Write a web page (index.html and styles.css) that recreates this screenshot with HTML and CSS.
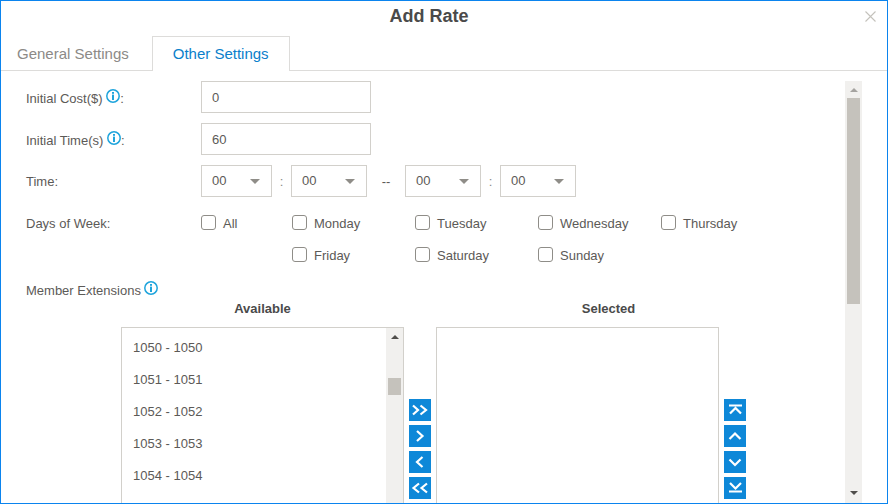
FILE: index.html
```html
<!DOCTYPE html>
<html lang="en">
<head>
    <meta charset="UTF-8">
    <meta name="viewport" content="width=device-width, initial-scale=1.0">
    <title>Add Rate</title>
    <link rel="stylesheet" href="styles.css">
</head>
<body>
    <svg class="defs" width="0" height="0">
        <symbol id="info" viewBox="0 0 14 14">
            <circle cx="7" cy="7" r="6.200" fill="none" stroke="#1ea4dc" stroke-width="1.500"/>
            <rect x="6" y="3" width="2" height="1.800" fill="#1ea4dc"/>
            <rect x="6" y="5.600" width="2" height="5.400" fill="#1ea4dc"/>
        </symbol>
    </svg>

    <div class="dialog">
        <div class="dialog-title">
            <h1>Add Rate</h1>
            <svg class="close" width="11" height="11" viewBox="0 0 11 11"><path d="M0.500 0.500L10.500 10.500M10.500 0.500L0.500 10.500" stroke="#c4c2bc" stroke-width="1.100" fill="none"/></svg>
        </div>
        <div class="tabs">
            <a class="tab">General Settings</a>
            <a class="tab active">Other Settings</a>
        </div>

        <div class="dialog-body">
            <div class="form">
                <div class="row">
                    <label class="label">Initial Cost($) <svg class="info"><use href="#info"/></svg>:</label>
                    <input class="text-input" type="text" value="0">
                </div>
                <div class="row">
                    <label class="label">Initial Time(s) <svg class="info"><use href="#info"/></svg>:</label>
                    <input class="text-input" type="text" value="60">
                </div>
                <div class="row">
                    <label class="label">Time:</label>
                    <div class="select first">00<i class="caret"></i></div>
                    <span class="colon">:</span>
                    <div class="select">00<i class="caret"></i></div>
                    <span class="dash">--</span>
                    <div class="select">00<i class="caret"></i></div>
                    <span class="colon">:</span>
                    <div class="select">00<i class="caret"></i></div>
                </div>
                <div class="days-row">
                    <label class="label">Days of Week:</label>
                    <div class="days">
                        <label class="check"><input type="checkbox">All</label>
                        <label class="check"><input type="checkbox">Monday</label>
                        <label class="check"><input type="checkbox">Tuesday</label>
                        <label class="check"><input type="checkbox">Wednesday</label>
                        <label class="check"><input type="checkbox">Thursday</label>
                        <label class="check second-row"><input type="checkbox">Friday</label>
                        <label class="check"><input type="checkbox">Saturday</label>
                        <label class="check"><input type="checkbox">Sunday</label>
                    </div>
                </div>

                <div class="member-label">Member Extensions <svg class="info member-info"><use href="#info"/></svg></div>

                <div class="transfer">
                    <div class="pane">
                        <div class="pane-title">Available</div>
                        <div class="listbox">
                            <ul class="items">
                                <li>1050 - 1050</li>
                                <li>1051 - 1051</li>
                                <li>1052 - 1052</li>
                                <li>1053 - 1053</li>
                                <li>1054 - 1054</li>
                            </ul>
                            <div class="list-scroll">
                                <i class="arrow-up dark"></i>
                                <div class="list-thumb"></div>
                            </div>
                        </div>
                    </div>
                    <div class="move-btns">
                        <button class="icon-btn"><svg viewBox="0 0 22 22"><path d="M4 6.500L9 11L4 15.500M11.500 6.500L17 11L11.500 15.500" /></svg></button>
                        <button class="icon-btn"><svg viewBox="0 0 22 22"><path d="M8 6L13.500 11L8 16" /></svg></button>
                        <button class="icon-btn"><svg viewBox="0 0 22 22"><path d="M13.500 6L8 11L13.500 16" /></svg></button>
                        <button class="icon-btn"><svg viewBox="0 0 22 22"><path d="M10 6.500L4.500 11L10 15.500M18 6.500L12.500 11L18 15.500" /></svg></button>
                    </div>
                    <div class="pane">
                        <div class="pane-title selected-title">Selected</div>
                        <div class="listbox"></div>
                    </div>
                    <div class="move-btns">
                        <button class="icon-btn"><svg viewBox="0 0 22 22"><path d="M5 6.500H18M6 14.500L11.500 9L17 14.500" /></svg></button>
                        <button class="icon-btn"><svg viewBox="0 0 22 22"><path d="M5.500 14L11 8.500L16.500 14" /></svg></button>
                        <button class="icon-btn"><svg viewBox="0 0 22 22"><path d="M5.500 8.500L11 14L16.500 8.500" /></svg></button>
                        <button class="icon-btn"><svg viewBox="0 0 22 22"><path d="M6 6L11.500 11.500L17 6M5 14.500H18" /></svg></button>
                    </div>
                </div>
            </div>

            <div class="scrollbar">
                <i class="arrow-up"></i>
                <div class="thumb"></div>
                <i class="arrow-down"></i>
            </div>
        </div>
    </div>
</body>
</html>
```

FILE: styles.css
```css
* {
    box-sizing: border-box;
}

html, body {
    margin: 0;
    height: 100%;
    overflow: hidden;
}

body {
    font-family: "Liberation Sans", Arial, sans-serif;
    font-size: 13px;
    color: #5c5a57;
    background-color: #ffffff;
}

.defs {
    position: absolute;
}

.dialog {
    height: 504px;
    border: 1px solid #0b84ee;
    display: flex;
    flex-direction: column;
    overflow: hidden;
}

.dialog-title {
    height: 35px;
    flex: none;
    position: relative;
    text-align: center;
    padding-right: 30px;
}

.dialog-title h1 {
    margin: 0;
    font-size: 18px;
    line-height: 30px;
    font-weight: bold;
    color: #4a4a4a;
}

.close {
    position: absolute;
    top: 10px;
    right: 11px;
}

.tabs {
    height: 35px;
    flex: none;
    display: flex;
    align-items: flex-start;
    padding-left: 16px;
    border-bottom: 1px solid #dddcda;
}

.tab {
    font-size: 15px;
    height: 35px;
    line-height: 35px;
    color: #8c8a87;
}

.tab.active {
    margin-left: 23px;
    padding: 0 20px;
    color: #0b7fcb;
    background-color: #ffffff;
    border: 2px solid #dddcda;
    border-width: 1px 1px 0;
    line-height: 34px;
}

.dialog-body {
    flex: 1;
    min-height: 0;
    display: flex;
    overflow: hidden;
}

.form {
    width: 844px;
    flex: none;
    padding: 10px 0 0 25px;
}

.row {
    display: flex;
    align-items: center;
    height: 32px;
    margin-bottom: 10px;
}

.label {
    width: 175px;
    flex: none;
}

.info {
    width: 14px;
    height: 14px;
}

.member-info {
    margin-left: -1px;
}

.text-input {
    width: 170px;
    height: 32px;
    padding: 0 10px;
    border: 1px solid #d2d0cb;
    font-family: inherit;
    font-size: 13px;
    color: #5c5a57;
    outline: none;
}

.select {
    width: 76px;
    height: 32px;
    padding-left: 10px;
    line-height: 30px;
    border: 1px solid #d2d0cb;
    position: relative;
}

.select.first {
    width: 71px;
}

.caret {
    position: absolute;
    right: 11px;
    top: 13px;
    border-left: 5px solid transparent;
    border-right: 5px solid transparent;
    border-top: 5px solid #8f8d88;
}

.colon {
    width: 19px;
    text-align: center;
    color: #8c8a87;
}

.dash {
    width: 38px;
    text-align: center;
}

.days-row {
    display: flex;
}

.days-row .label {
    line-height: 32px;
    padding-top: 1px;
}

.days {
    display: grid;
    grid-template-columns: 91px 123px 123px 123px auto;
    grid-auto-rows: 32px;
}

.check {
    display: flex;
    align-items: center;
    gap: 7px;
}

.second-row {
    grid-column-start: 2;
}

.check input {
    appearance: none;
    width: 15px;
    height: 15px;
    margin: 0 0 2px 0;
    border: 1px solid #8f8d88;
    border-radius: 3px;
    background-color: #ffffff;
}

.member-label {
    margin-top: 10px;
    height: 19px;
    line-height: 20px;
}

.transfer {
    display: flex;
    margin-left: 95px;
}

.pane {
    width: 283px;
    flex: none;
}

.pane-title {
    height: 27px;
    line-height: 18px;
    text-align: center;
    font-weight: bold;
    color: #4a4a4a;
}

.selected-title {
    padding-left: 62px;
}

.listbox {
    height: 220px;
    border: 1px solid #d2d0cb;
    display: flex;
    justify-content: space-between;
}

.items {
    list-style: none;
    margin: 0;
    padding: 4px 0 0 11px;
}

.items li {
    height: 32px;
    line-height: 32px;
}

.list-scroll {
    width: 17px;
    background-color: #f1f0ee;
    padding-top: 7px;
    position: relative;
}

.list-thumb {
    position: absolute;
    top: 50px;
    left: 2px;
    width: 13px;
    height: 17px;
    background-color: #c5c2bc;
}

.arrow-up, .arrow-down {
    display: block;
    width: 0;
    margin: 0 auto;
    border-left: 4px solid transparent;
    border-right: 4px solid transparent;
}

.arrow-up {
    border-bottom: 4px solid #a5a3a0;
}

.arrow-up.dark {
    border-bottom-color: #4f4d4a;
}

.arrow-down {
    border-top: 4px solid #4f4d4a;
}

.move-btns {
    width: 32px;
    flex: none;
    padding: 99px 0 0 5px;
    display: flex;
    flex-direction: column;
    gap: 4px;
}

.icon-btn {
    width: 22px;
    height: 22px;
    padding: 0;
    border: none;
    background-color: #0e88d8;
}

.icon-btn svg {
    display: block;
    width: 22px;
    height: 22px;
}

.icon-btn path {
    fill: none;
    stroke: #ffffff;
    stroke-width: 2.2;
}

.scrollbar {
    width: 17px;
    flex: none;
    margin-top: 10px;
    background-color: #f1f0ee;
    display: flex;
    flex-direction: column;
    align-items: center;
    padding: 7px 0 8px;
}

.thumb {
    width: 13px;
    height: 206px;
    margin-top: 6px;
    background-color: #c5c2bc;
}

.scrollbar .arrow-down {
    margin-top: auto;
}
```
